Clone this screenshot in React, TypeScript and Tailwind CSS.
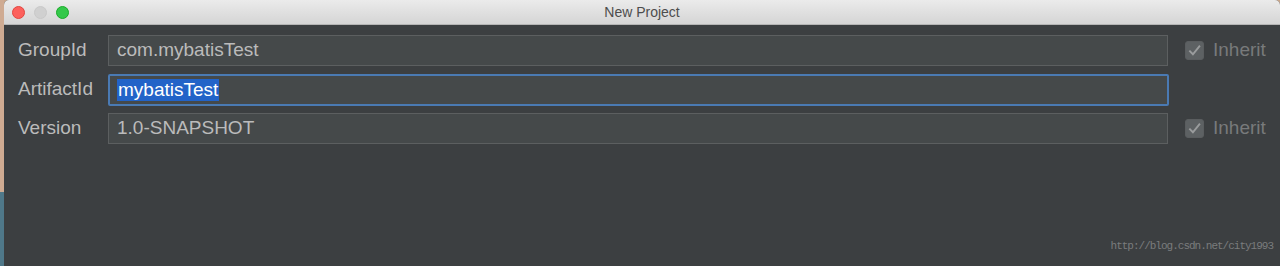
import React from "react";

function Check() {
  return (
    <span className="flex h-[19px] w-[19px] items-center justify-center rounded-[3px] border border-[#5a5d5f] bg-[#5d6163]">
      <svg viewBox="0 0 16 16" className="h-[15px] w-[15px]">
        <path d="M2.5 8.2 L6.3 12 L13.8 2.8" fill="none" stroke="#9a9c9d" strokeWidth="2" />
      </svg>
    </span>
  );
}

function Row({
  label,
  value,
  focused,
  inherit,
}: {
  label: string;
  value: string;
  focused?: boolean;
  inherit?: boolean;
}) {
  return (
    <div className="flex h-[31px] items-center">
      <div className="w-[90px] text-[19px] text-[#bbbbbb]">{label}</div>
      <div
        className={
          focused
            ? "flex h-[32px] w-[1061px] items-center rounded-[2px] border-2 border-[#4a7ab3] bg-[#45494a] pl-[7px]"
            : "flex h-[31px] w-[1060px] items-center border border-[#5c5f60] bg-[#45494a] pl-[8px]"
        }
      >
        {focused ? (
          <span className="bg-[#2263c8] px-px text-[19px] leading-[22px] text-white">{value}</span>
        ) : (
          <span className="text-[19px] text-[#bbbbbb]">{value}</span>
        )}
      </div>
      {inherit && (
        <div className="ml-[17px] flex items-center gap-[9px]">
          <Check />
          <span className="text-[19px] text-[#787a7b]">Inherit</span>
        </div>
      )}
    </div>
  );
}

export default function App() {
  return (
    <div
      className="flex h-[266px] w-[1280px] overflow-hidden bg-[#c9a68a]"
      style={{ fontFamily: '"Liberation Sans", Arial, sans-serif' }}
    >
      <div className="flex w-[4px] flex-col">
        <div className="h-[192px] bg-[#cfab92]" />
        <div className="flex-1 bg-[#4f7889]" />
      </div>
      <div className="flex flex-1 flex-col overflow-hidden rounded-tl-[5px] rounded-tr-[5px] bg-[#3c3f41]">
        <div className="relative flex h-[25px] items-center border-b border-[#b5b5b5] bg-gradient-to-b from-[#ebebeb] to-[#d5d5d5]">
          <div className="flex gap-[9px] pl-[8px]">
            <span className="h-[13px] w-[13px] rounded-full border border-[#e2463f] bg-[#fc605c]" />
            <span className="h-[13px] w-[13px] rounded-full border border-[#c9c9c9] bg-[#d0d0d0]" />
            <span className="h-[13px] w-[13px] rounded-full border border-[#1aab29] bg-[#34c84a]" />
          </div>
          <div className="absolute inset-0 flex items-center justify-center text-[14px] text-[#4d4d4d]">
            New Project
          </div>
        </div>
        <div className="flex flex-col gap-[8px] pl-[14px] pt-[10px]">
          <Row label="GroupId" value="com.mybatisTest" inherit />
          <Row label="ArtifactId" value="mybatisTest" focused />
          <Row label="Version" value="1.0-SNAPSHOT" inherit />
        </div>
        <div className="mt-auto flex justify-end pb-[12px] pr-[7px]">
          <span
            className="text-[11px] tracking-[-1px] text-[#7a7c7d]"
            style={{ fontFamily: '"Liberation Mono", monospace' }}
          >
            http://blog.csdn.net/city1993
          </span>
        </div>
      </div>
    </div>
  );
}
